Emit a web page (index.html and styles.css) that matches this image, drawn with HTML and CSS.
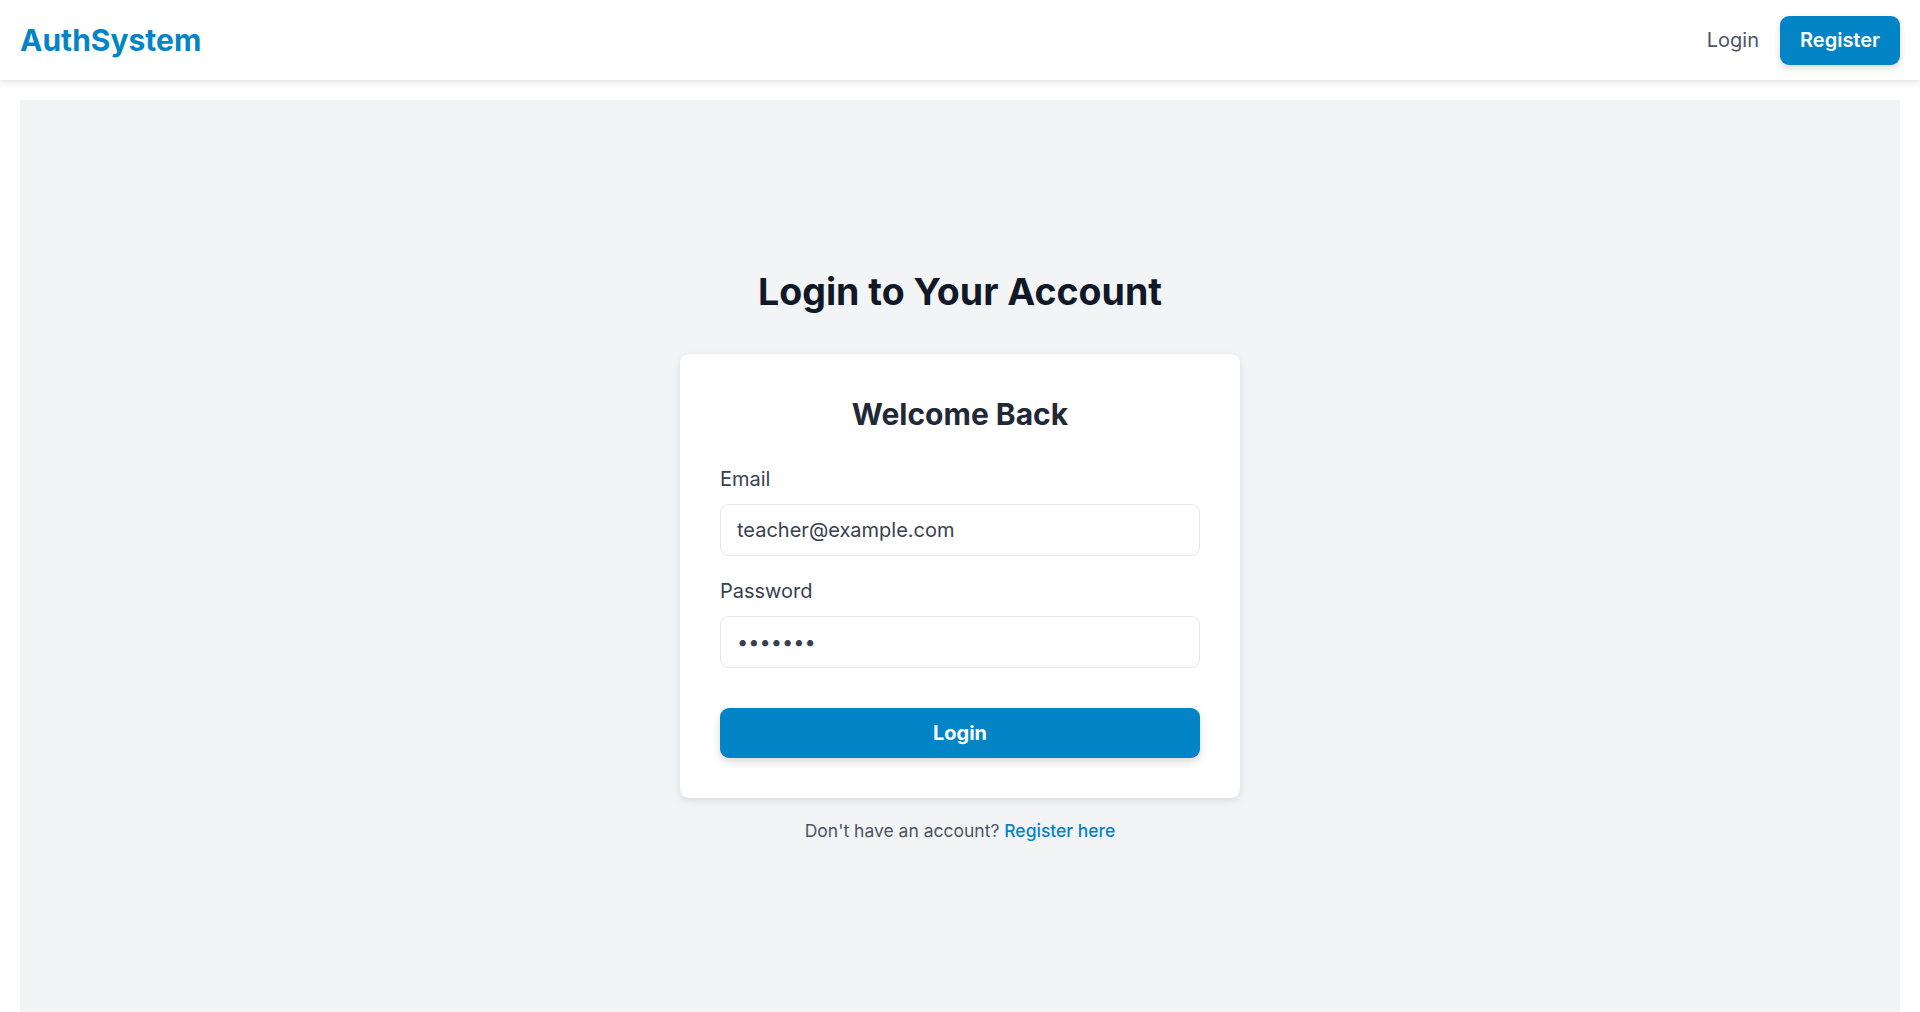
FILE: index.html
```html
<!DOCTYPE html>
<html lang="en">
<head>
<meta charset="UTF-8">
<title>AuthSystem - Login</title>
<link rel="stylesheet" href="styles.css">
</head>
<body>

<!-- Top navigation -->
<header class="navbar">
  <a class="brand" href="#">AuthSystem</a>
  <nav class="nav-links">
    <a class="nav-link" href="#">Login</a>
    <a class="nav-btn" href="#">Register</a>
  </nav>
</header>

<!-- Page body -->
<main class="page">
  <h1 class="page-title">Login to Your Account</h1>

  <form class="card" onsubmit="return false">
    <h2 class="card-title">Welcome Back</h2>

    <label class="field-label" for="email">Email</label>
    <input class="field" id="email" type="email" value="teacher@example.com">

    <label class="field-label" for="password">Password</label>
    <input class="field" id="password" type="password" value="1234567">

    <button class="submit-btn" type="submit">Login</button>
  </form>

  <p class="switch">Don't have an account? <a href="#">Register here</a></p>
</main>

</body>
</html>
```

FILE: styles.css
```css
body{margin:0;font-family:Inter,"Noto Sans",Arial,sans-serif;background:#fff;color:#111827}
a{text-decoration:none}
/* Navbar */
.navbar{height:80px;background:#fff;display:flex;align-items:center;justify-content:space-between;padding:0 20px;box-shadow:0 2px 6px rgba(0,0,0,0.12);position:relative;z-index:1}
.brand{font-size:30px;font-weight:700;color:#0284c7}
.nav-links{display:flex;align-items:center;gap:21px}
.nav-link{font-size:20px;color:#4b5563}
.nav-btn{display:block;background:#0284c7;color:#fff;font-size:20px;font-weight:600;padding:0 20px;height:49px;line-height:49px;border-radius:9px;box-shadow:0 3px 6px rgba(0,0,0,0.15)}
/* Main area */
.page{margin:20px 20px 0;background:#f3f4f6;min-height:940px;padding-top:169px;display:flex;flex-direction:column;align-items:center}
.page-title{margin:0 0 39px;font-size:37.5px;line-height:46px;font-weight:700;color:#111827}
.card{width:480px;background:#fff;border-radius:9px;padding:42px 40px 40px;box-shadow:0 3px 8px rgba(0,0,0,0.1);display:flex;flex-direction:column}
.card-title{margin:0 0 33px;text-align:center;font-size:30px;line-height:36px;font-weight:700;color:#1f2937}
.field-label{font-size:20px;line-height:28px;color:#374151;margin-bottom:11px}
.field{box-sizing:border-box;height:52px;border:1px solid #e5e7eb;border-radius:9px;padding:0 16px;font-family:inherit;font-size:20px;color:#374151;background:#fff;outline:none;margin-bottom:21px}
#password{margin-bottom:40px}
.submit-btn{height:50px;border:none;border-radius:9px;background:#0284c7;color:#fff;font-family:inherit;font-size:20px;font-weight:700;cursor:pointer;box-shadow:0 4px 8px rgba(0,0,0,0.15)}
.switch{margin:21px 0 0;font-size:17.5px;line-height:24px;color:#4b5563}
.switch a{color:#0284c7;font-weight:500}
```
